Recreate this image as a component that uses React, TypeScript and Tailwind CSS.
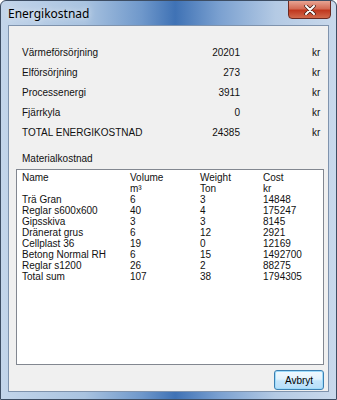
import React from "react";

const energy = [
  ["Värmeförsörjning", "20201"],
  ["Elförsörjning", "273"],
  ["Processenergi", "3911"],
  ["Fjärrkyla", "0"],
  ["TOTAL ENERGIKOSTNAD", "24385"],
];

const rows: [string, string, string, string][] = [
  ["Name", "Volume", "Weight", "Cost"],
  ["", "m³", "Ton", "kr"],
  ["Trä Gran", "6", "3", "14848"],
  ["Reglar s600x600", "40", "4", "175247"],
  ["Gipsskiva", "3", "3", "8145"],
  ["Dränerat grus", "6", "12", "2921"],
  ["Cellplast 36", "19", "0", "12169"],
  ["Betong Normal RH", "6", "15", "1492700"],
  ["Reglar s1200", "26", "2", "88275"],
  ["Total sum", "107", "38", "1794305"],
];

export default function App() {
  return (
    <div
      className="relative w-[337px] h-[400px] overflow-hidden rounded-t-[6px] border border-[#3d4d63] flex flex-col"
      style={{
        background:
          "linear-gradient(90deg, #c3d5ea 0%, #a9c3e0 25%, #6f98cb 42%, #3f72b5 52%, #7aa0d0 65%, #b4cae4 82%, #c9d9ec 100%)",
        fontFamily: "Tahoma, 'Liberation Sans', Arial, sans-serif",
      }}
    >
      <div className="h-[24px] shrink-0 flex items-center pl-[7px] pt-[1px]">
        <span className="text-[12px] text-black" style={{ fontFamily: "'Noto Sans', 'Open Sans', sans-serif", textShadow: "0 0 6px rgba(255,255,255,0.9)" }}>
          Energikostnad
        </span>
      </div>
      <div
        className="absolute right-[5px] top-[-1px] w-[43px] h-[19px] rounded-b-[4px] border border-[#6b2a22] flex items-center justify-center"
        style={{ background: "linear-gradient(180deg, #e8a493 0%, #d46b55 45%, #c0381f 55%, #d1694c 100%)" }}
      >
        <svg width="12" height="10" viewBox="0 0 12 10">
          <path d="M2 1 L10 9 M10 1 L2 9" stroke="#3b1a14" strokeWidth="3.4" strokeLinecap="round" />
          <path d="M2 1 L10 9 M10 1 L2 9" stroke="#ffffff" strokeWidth="2" strokeLinecap="round" />
        </svg>
      </div>
      <div className="mx-[7px] mb-[7px] flex-1 border border-[#7f93ad] bg-[#f0f0f0] flex flex-col text-[10px] text-[#111] leading-[11px]"
        style={{ fontFamily: "'Liberation Sans', Arial, sans-serif" }}>
        <div className="pt-[16px] pl-[13px] flex flex-col">
          {energy.map(([l, v]) => (
            <div key={l} className="h-[20px] flex items-center">
              <span className="w-[170px]">{l}</span>
              <span className="w-[48px] text-right">{v}</span>
              <span className="ml-[72px]">kr</span>
            </div>
          ))}
        </div>
        <div className="pl-[13px] mt-[9px] h-[14px] flex items-center">Materialkostnad</div>
        <div className="ml-[7px] mr-[4px] mt-[4px] h-[196px] border border-[#828790] bg-white pl-[5px] pt-[2px]">
          {rows.map((r, i) => (
            <div key={i} className="h-[11px] flex items-center">
              <span className="w-[108px]">{r[0]}</span>
              <span className="w-[70px]">{r[1]}</span>
              <span className="w-[63px]">{r[2]}</span>
              <span>{r[3]}</span>
            </div>
          ))}
        </div>
        <div className="flex justify-end mr-[4px] mt-[5px]">
          <button
            className="w-[50px] h-[20px] rounded-[3px] border border-[#3c7fb1] text-[10px] text-black flex items-center justify-center"
            style={{
              background: "linear-gradient(180deg, #f2f9fe 0%, #e3f3fd 45%, #c4e5fb 55%, #b7def9 100%)",
              boxShadow: "inset 0 0 0 1px #9fdcfb",
            }}
          >
            Avbryt
          </button>
        </div>
      </div>
    </div>
  );
}
